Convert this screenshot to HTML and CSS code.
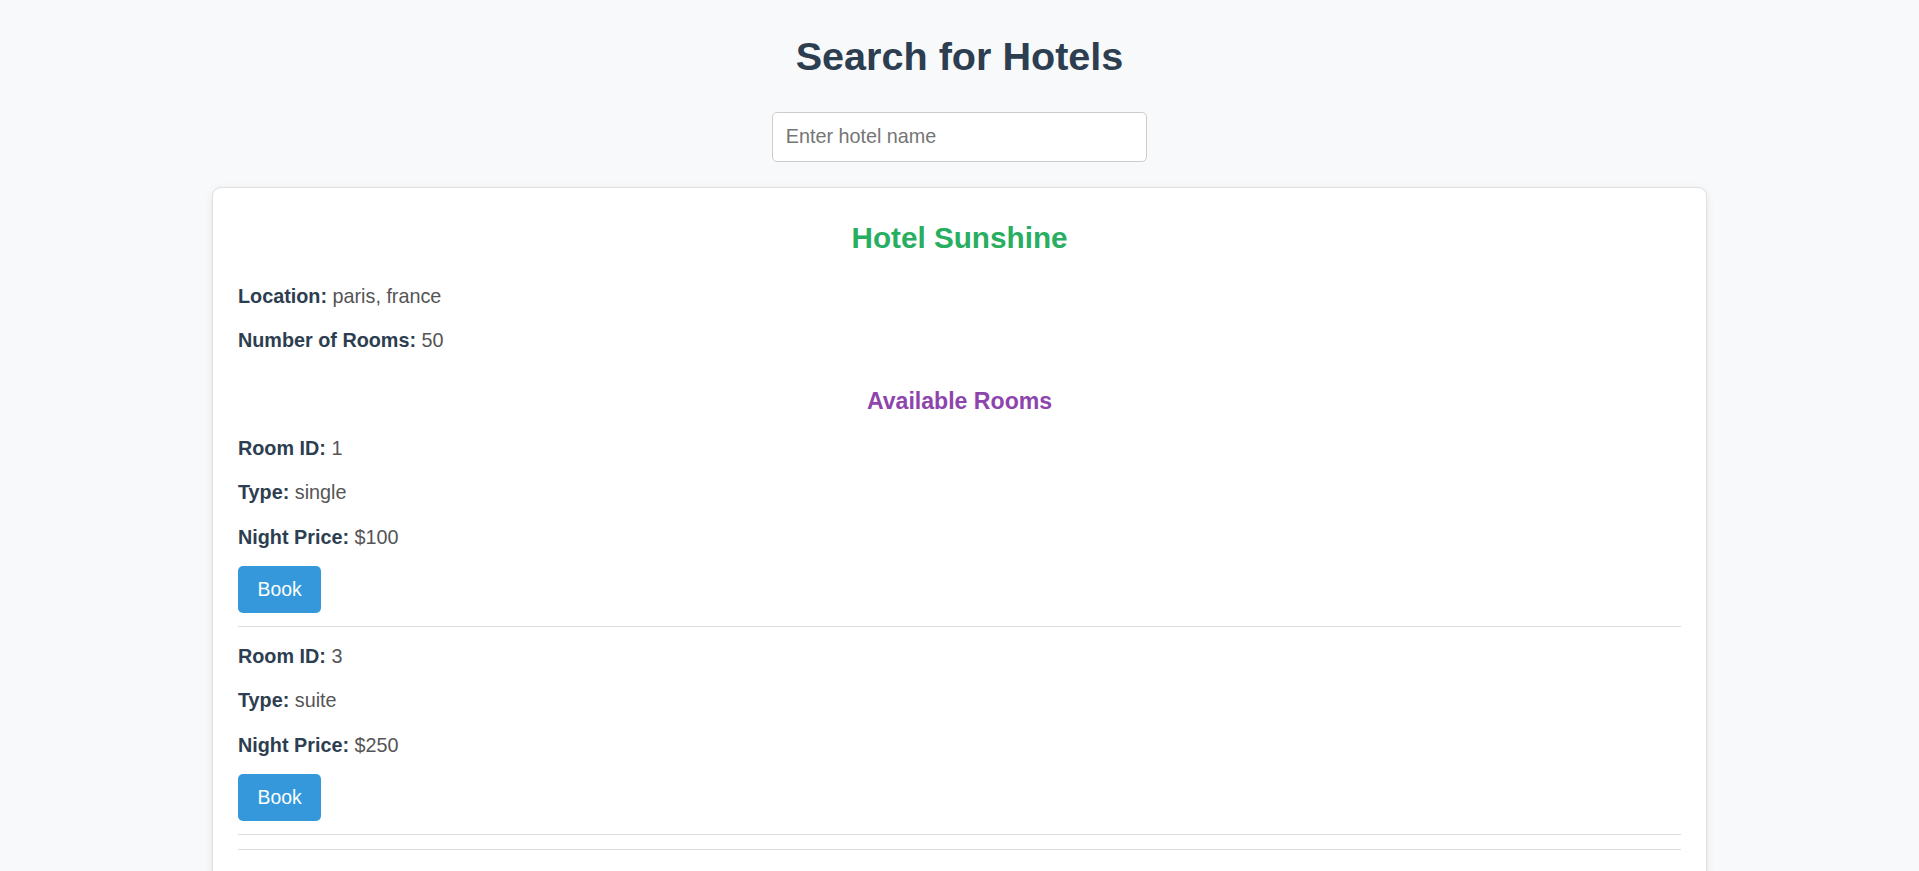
FILE: index.html
```html
<!DOCTYPE html>
<html lang="en">
<head>
<meta charset="utf-8">
<title>Search for Hotels</title>
<link rel="stylesheet" href="styles.css">
</head>
<body>
  <h1 class="page-title">Search for Hotels</h1>
  <div class="search">
    <input class="search-input" type="text" placeholder="Enter hotel name">
  </div>
  <div class="hotel-card">
    <h2 class="hotel-name">Hotel Sunshine</h2>
    <p class="info first"><strong>Location:</strong> paris, france</p>
    <p class="info second"><strong>Number of Rooms:</strong> 50</p>
    <h3 class="rooms-title">Available Rooms</h3>
    <div class="rooms">
      <div class="room">
        <p><strong>Room ID:</strong> 1</p>
        <p><strong>Type:</strong> single</p>
        <p><strong>Night Price:</strong> $100</p>
        <button class="book" type="button">Book</button>
      </div>
      <div class="room">
        <p><strong>Room ID:</strong> 3</p>
        <p><strong>Type:</strong> suite</p>
        <p><strong>Night Price:</strong> $250</p>
        <button class="book" type="button">Book</button>
      </div>
    </div>
    <hr class="divider">
  </div>
</body>
</html>
```
FILE: styles.css
```css
html, body {
  margin: 0;
  padding: 0;
}
body {
  background: #f8f9fa;
  font-family: "Liberation Sans", Arial, sans-serif;
  color: #555;
  min-height: 2084px;
}
.page-title {
  margin: 33.3px 0 0;
  font-size: 39.6px;
  line-height: 46px;
  font-weight: bold;
  color: #2c3e50;
  text-align: center;
}
.search {
  display: flex;
  justify-content: center;
  margin-top: 33px;
}
.search-input {
  box-sizing: border-box;
  width: 374.4px;
  height: 49.4px;
  padding: 0 12.4px;
  border: 1px solid #ccc;
  border-radius: 5px;
  background: #fff;
  font-family: "Liberation Sans", Arial, sans-serif;
  font-size: 19.8px;
  color: #333;
  outline: none;
}
.search-input::placeholder {
  color: #757575;
}
.hotel-card {
  box-sizing: border-box;
  width: 1495px;
  margin: 25.6px auto 0;
  padding: 25px 25px 40px;
  background: #fff;
  border: 1px solid #e0e0e0;
  border-radius: 9px;
  box-shadow: 0 2px 8px rgba(0, 0, 0, 0.08);
  display: flex;
  flex-direction: column;
  min-height: 1800px;
}
.hotel-name {
  margin: 8px 0 0;
  font-size: 29.7px;
  line-height: 34px;
  font-weight: bold;
  color: #27ae60;
  text-align: center;
}
.info {
  margin: 0;
  font-size: 19.8px;
  line-height: 26.8px;
}
.info.first {
  margin-top: 28.2px;
}
.info.second {
  margin-top: 16.6px;
}
strong {
  color: #2c3e50;
  font-weight: bold;
}
.rooms-title {
  margin: 34px 0 0;
  font-size: 23.1px;
  line-height: 27px;
  font-weight: bold;
  color: #8e44ad;
  text-align: center;
}
.rooms {
  margin-top: 20.2px;
  display: flex;
  flex-direction: column;
}
.room {
  display: flex;
  flex-direction: column;
  align-items: flex-start;
  padding-bottom: 13.2px;
  border-bottom: 1px solid #ddd;
}
.room + .room {
  margin-top: 16px;
}
.room p {
  margin: 0;
  font-size: 19.8px;
  line-height: 26.8px;
}
.room p + p {
  margin-top: 17.6px;
}
.book {
  margin-top: 15.2px;
  height: 47.3px;
  padding: 0 19.6px;
  border: 0;
  border-radius: 5px;
  background: #3498db;
  color: #fff;
  font-family: "Liberation Sans", Arial, sans-serif;
  font-size: 19.36px;
  cursor: pointer;
}
.divider {
  width: 100%;
  margin: 13.4px 0 0;
  height: 0;
  border: 0;
  border-top: 1px solid #ddd;
}
```
